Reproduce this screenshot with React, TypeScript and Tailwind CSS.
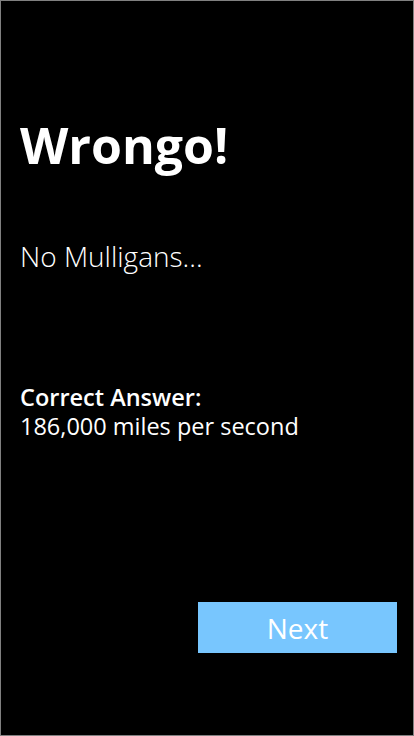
export default function App() {
  return (
    <div className="w-[414px] h-[736px] bg-black border border-[#808080] flex flex-col text-white" style={{ fontFamily: '"Open Sans", "Noto Sans", sans-serif' }}>
      <div className="pl-[19px] pt-[114px]">
        <h1 className="text-[50px] font-bold leading-[60px]">Wrongo!</h1>
        <p className="mt-[63px] text-[28px] font-light leading-[36px]">No Mulligans...</p>
        <div className="mt-[109px] flex flex-col">
          <p className="text-[23.5px] font-semibold leading-[29px]">Correct Answer:</p>
          <p className="text-[23.5px] leading-[29px]">186,000 miles per second</p>
        </div>
      </div>
      <div className="flex-1" />
      <div className="flex justify-end pr-[16px] pb-[82px]">
        <button className="w-[199px] h-[51px] bg-[#78c6fe] text-white text-[28px] leading-[53px]">Next</button>
      </div>
    </div>
  );
}
